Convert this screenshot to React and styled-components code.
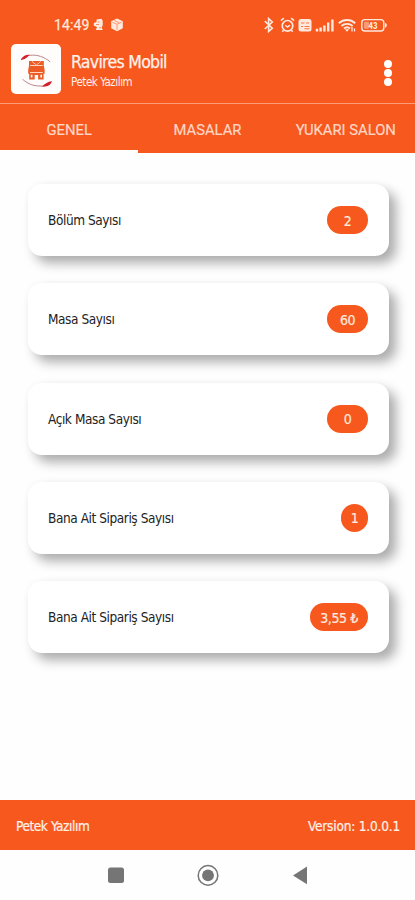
import React from "react";
import styled, { createGlobalStyle } from "styled-components";

const stats = [
  { label: "Bölüm Sayısı", value: "2", width: 41 },
  { label: "Masa Sayısı", value: "60", width: 41 },
  { label: "Açık Masa Sayısı", value: "0", width: 41 },
  { label: "Bana Ait Sipariş Sayısı", value: "1", width: 27 },
  { label: "Bana Ait Sipariş Sayısı", value: "3,55 ₺", width: 58 },
];

const tabs = ["GENEL", "MASALAR", "YUKARI SALON"];

const StatusIcons = () => (
  <svg width="126" height="18" viewBox="0 0 126 18" fill="none" stroke="#ffe9df">
    <path d="M1.8 5.2l7.5 7-3.7 3.3V2.5L9.3 6l-7.5 7" strokeWidth="1.6" />
    <circle cx="24.5" cy="9.8" r="5.3" strokeWidth="1.7" />
    <path d="M17.9 4.6l3-2.5M28.1 2.1l3 2.5M20.6 14.2l-1.3 1.6M28.4 14.2l1.3 1.6" strokeWidth="1.5" />
    <path d="M22.2 9.3l2.3 1.8 2.5-2" strokeWidth="1.4" />
    <rect x="35.5" y="3" width="13" height="12.5" rx="2.5" fill="#ffe9df" stroke="none" />
    <path d="M38 7h3.5M43 7h3M38 10.5h2M41.5 10.5h5M41.5 12.8h5" stroke="#f6783f" strokeWidth="1.1" />
    <path d="M54 15.4v-2.6M57.6 15.4v-4M61.4 15.4V9.4M65.2 15.4V6.6M69.4 15.4V3.5" strokeWidth="2.4" />
    <path d="M75.8 7.2c4.7-4.3 11.7-4.3 16.4 0M78.4 10c3.2-2.9 8-2.9 11.2 0M80.9 12.5c1.9-1.6 4.3-1.6 6.2 0" strokeWidth="1.9" />
    <path d="M81.8 13.3h4.4L84 15.8z" fill="#ffe9df" stroke="none" />
    <path d="M89 11v4.5M91.5 12.5v3" strokeWidth="1.3" />
    <rect x="98.8" y="3.6" width="22" height="11.4" rx="3" strokeWidth="1.4" />
    <path d="M122 6.8c2.4 1 2.4 4 0 5z" fill="#ffe9df" stroke="none" />
    <rect x="101" y="5.8" width="5" height="7" rx="1" fill="#f99a70" stroke="none" />
    <text x="105.5" y="12.6" fill="#ffe9df" stroke="none" fontFamily="Roboto" fontWeight="700" fontSize="9">
      43
    </text>
  </svg>
);

const NoticeIcons = () => (
  <svg width="32" height="14" viewBox="0 0 32 14">
    <path d="M3.5 1.5L8.5.8l1.2 2v4.5l-1 2 1 2.8H2.8L4 9 .8 7.5V5L3.5 4z" fill="#ffe9df" />
    <path d="M4.8 4h1.8M3 6.5h3M6 9.8h2" stroke="#f8814f" strokeWidth="0.9" />
    <path d="M24 .5l5.8 2.7v7L24 13.2l-5.8-3v-7z" fill="#ffe9df" />
    <path d="M19.3 4.2L24 6.3l4.5-2M24 6.5V12M21.3 2.5l4.8 2.2" stroke="#f99a70" fill="none" />
  </svg>
);

const LogoMark = () => (
  <svg width="42" height="42" viewBox="0 0 42 42">
    <path d="M5.8 11.3C9 6.8 12.8 6.2 15.4 7.2c-2.8.6-3.5 3.8-9.3 4.7z" fill="#d3202b" />
    <path d="M14.5 7.3c8-.8 14.5 1.5 20.7 6.5" stroke="#b9858b" strokeWidth="1" fill="none" />
    <path d="M37 33.2c-1.8 5-6.8 6.2-11.3 5 3.7-.4 4.3-3.8 10.6-5z" fill="#d3202b" />
    <path d="M7.6 31.3c5.8 5 11.3 7 19.4 6.7" stroke="#b9858b" strokeWidth="1" fill="none" />
    <path d="M14 13h14.8v4.6l.8 4.4v3.8h-1v5.6h-5.5V27H19.7v4.4h-5.5v-5.6h-1V22l.8-4.4z" fill="#ed5b25" />
    <path d="M15 17.5h12.8M15 24.5h12.8" stroke="#ffd3c1" strokeWidth="1.1" />
    <path d="M17 13.4l4.4 3.6 4.4-3.6" stroke="#ffc4ae" fill="none" />
    <path d="M16.6 26.8v2.6M26.2 26.8v2.6" stroke="#fff" strokeWidth="1.6" />
  </svg>
);

const App = () => {
  return (
    <Screen>
      <GlobalStyle />
      <StatusBar>
        <Clock>14:49</Clock>
        <NoticeIcons />
        <Spacer />
        <StatusIcons />
      </StatusBar>
      <Header>
        <Logo>
          <LogoMark />
        </Logo>
        <Titles>
          <Title>Ravires Mobil</Title>
          <Subtitle>Petek Yazılım</Subtitle>
        </Titles>
        <MenuButton aria-label="Menu">
          <Dot />
          <Dot />
          <Dot />
        </MenuButton>
      </Header>
      <TabBar>
        {tabs.map((tab, i) => (
          <Tab key={tab} $active={i === 0}>
            {tab}
          </Tab>
        ))}
      </TabBar>
      <Content>
        {stats.map(({ label, value, width }, i) => (
          <Card key={i}>
            <Label>{label}</Label>
            <Badge $width={width}>{value}</Badge>
          </Card>
        ))}
      </Content>
      <Footer>
        <Company>Petek Yazılım</Company>
        <Version>Version: 1.0.0.1</Version>
      </Footer>
      <NavBar>
        <svg width="200" height="24" viewBox="0 0 200 24" fill="#757575">
          <rect x="0" y="4.5" width="16" height="15.5" rx="2.5" />
          <circle cx="100" cy="12.4" r="9.8" fill="none" stroke="#757575" strokeWidth="1.5" />
          <circle cx="100" cy="12.4" r="5.9" />
          <path d="M185 12.4l14-8.8v17.6z" />
        </svg>
      </NavBar>
    </Screen>
  );
};

const GlobalStyle = createGlobalStyle`
  body {
    margin: 0;
    background: #fefefe;
  }
`;

const Screen = styled.div`
  display: flex;
  flex-direction: column;
  width: 415px;
  height: 900px;
  overflow: hidden;
  background: #fefefe;
  font-family: "DejaVu Sans Condensed", "DejaVu Sans", sans-serif;
  font-stretch: condensed;
`;

const StatusBar = styled.div`
  display: flex;
  align-items: center;
  height: 33px;
  padding: 8px 26px 0 54px;
  background: #f6581e;
`;

const Clock = styled.span`
  margin-right: 4px;
  font-family: Roboto, sans-serif;
  font-size: 14px;
  font-stretch: normal;
  letter-spacing: 0.1px;
  color: #ffe9df;
  -webkit-text-stroke: 0.25px #ffe9df;
`;

const Spacer = styled.div`
  flex: 1;
`;

const Header = styled.header`
  display: flex;
  align-items: flex-start;
  height: 63px;
  padding: 3px 23px 0 11px;
  box-sizing: border-box;
  border-bottom: 1px solid #fb9c77;
  background: #f6581e;
`;

const Logo = styled.div`
  display: flex;
  align-items: center;
  justify-content: center;
  width: 50px;
  height: 50px;
  border-radius: 5px;
  background: #fffdfc;
`;

const Titles = styled.div`
  flex: 1;
  margin-left: 10px;
  padding-top: 8px;
  color: #fff1ea;
  white-space: nowrap;
`;

const Title = styled.div`
  font-size: 17.5px;
  line-height: 21px;
  letter-spacing: -0.7px;
  -webkit-text-stroke: 0.25px #fff1ea;
`;

const Subtitle = styled.div`
  font-size: 11.5px;
  line-height: 19px;
  letter-spacing: -0.45px;
`;

const MenuButton = styled.button`
  display: flex;
  flex-direction: column;
  gap: 1px;
  margin-top: 16px;
  padding: 0;
  border: none;
  background: none;
`;

const Dot = styled.span`
  width: 8px;
  height: 8px;
  border-radius: 50%;
  background: #fff;
`;

const TabBar = styled.nav`
  display: grid;
  grid-template-columns: repeat(3, 1fr);
  height: 49px;
  background: #f6581e;
`;

const Tab = styled.div`
  display: flex;
  align-items: center;
  justify-content: center;
  padding-top: 5px;
  border-bottom: 3px solid ${({ $active }) => ($active ? "#fefefe" : "transparent")};
  font-family: Roboto, sans-serif;
  font-size: 14.8px;
  font-stretch: normal;
  color: #ffd6c5;
  white-space: nowrap;
  -webkit-text-stroke: 0.2px #ffd6c5;
`;

const Content = styled.main`
  display: flex;
  flex: 1;
  flex-direction: column;
  gap: 27.3px;
  padding: 31px 26px 0 28px;
`;

const Card = styled.section`
  display: flex;
  align-items: center;
  justify-content: space-between;
  height: 72px;
  padding: 0 21px 0 20px;
  border-radius: 14px;
  box-sizing: border-box;
  background: #fff;
  box-shadow: 7px 7px 12px rgba(0, 0, 0, 0.33), -2px -2px 5px rgba(0, 0, 0, 0.015);
`;

const Label = styled.span`
  font-size: 13.5px;
  letter-spacing: -0.42px;
  color: #222;
`;

const Badge = styled.span`
  display: flex;
  align-items: center;
  justify-content: center;
  width: ${({ $width }) => $width}px;
  height: 28px;
  padding-top: 1px;
  border-radius: 14px;
  box-sizing: border-box;
  background: #f6581e;
  font-size: 14px;
  letter-spacing: -0.4px;
  color: #ffe9df;
  -webkit-text-stroke: 0.2px #ffe9df;
`;

const Footer = styled.footer`
  display: flex;
  align-items: center;
  justify-content: space-between;
  height: 50px;
  padding: 2px 15px 0 16px;
  box-sizing: border-box;
  background: #f6581e;
  color: #fff1ea;
  font-size: 13.5px;
  -webkit-text-stroke: 0.2px #fff1ea;
`;

const Company = styled.span`
  letter-spacing: -0.42px;
`;

const Version = styled.span`
  letter-spacing: -0.18px;
`;

const NavBar = styled.div`
  display: flex;
  justify-content: center;
  height: 50px;
  padding-top: 13px;
  box-sizing: border-box;
  background: #fefefe;
`;

export default App;
